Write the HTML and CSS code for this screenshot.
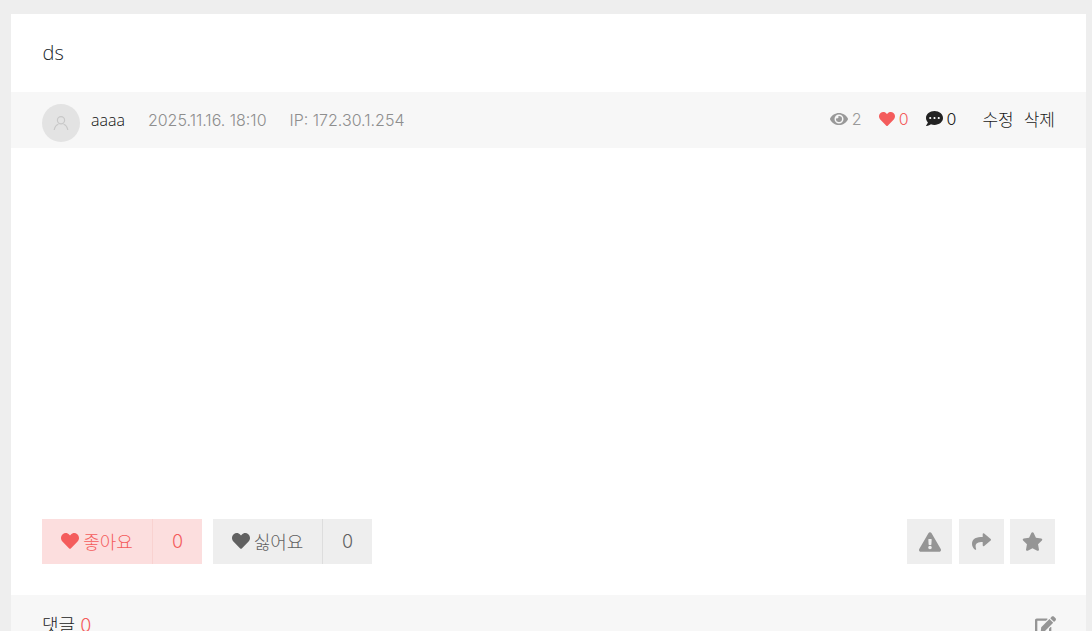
FILE: index.html
```html
<!DOCTYPE html>
<html lang="ko">
<head>
    <meta charset="UTF-8">
    <title>ds</title>
    <link rel="stylesheet" href="styles.css">
</head>
<body>
    <div class="card">
        <h1 class="title">ds</h1>

        <div class="meta">
            <div class="meta-left">
                <div class="avatar">
                    <svg viewBox="0 0 16 16" width="16" height="16" fill="none" stroke="#c8c8c8" stroke-width="1.2"><circle cx="8" cy="5.2" r="3.6"/><path d="M1.2 15c.6-3.6 3-5.4 4.2-5.8M14.8 15c-.6-3.6-3-5.4-4.2-5.8"/></svg>
                </div>
                <span class="author">aaaa</span>
                <span class="date">2025.11.16. 18:10</span>
                <span class="ip">IP: 172.30.1.254</span>
            </div>
            <div class="meta-right">
                <span class="stat stat-view">
                    <svg class="ico" viewBox="0 0 576 512" width="18" height="16"><path d="M572.52 241.4C518.29 135.59 410.93 64 288 64S57.68 135.64 3.48 241.41a32.35 32.35 0 0 0 0 29.19C57.71 376.41 165.07 448 288 448s230.32-71.64 284.52-177.41a32.35 32.35 0 0 0 0-29.19zM288 400a144 144 0 1 1 144-144 143.93 143.93 0 0 1-144 144zm0-240a95.31 95.31 0 0 0-25.31 3.79 47.85 47.85 0 0 1-66.9 66.9A95.78 95.78 0 1 0 288 160z"/></svg>
                    2
                </span>
                <span class="stat stat-like">
                    <svg class="ico" viewBox="0 0 512 512" width="16" height="16"><path d="M462.3 62.6C407.5 15.9 326 24.3 275.7 76.2L256 96.5l-19.7-20.3C186.1 24.3 104.5 15.9 49.7 62.6c-62.8 53.6-66.1 149.8-9.9 207.9l193.5 199.8c12.5 12.9 32.8 12.9 45.3 0l193.5-199.8c56.3-58.1 53-154.3-9.8-207.9z"/></svg>
                    0
                </span>
                <span class="stat stat-comment">
                    <svg class="ico" viewBox="0 0 512 512" width="17" height="17"><path d="M256 32C114.6 32 0 125.1 0 240c0 49.6 21.4 95 57 130.7C44.5 421.1 2.7 466 2.2 466.5c-2.2 2.3-2.8 5.7-1.5 8.7S4.8 480 8 480c66.3 0 116-31.8 140.6-51.4 32.7 12.3 69 19.4 107.4 19.4 141.4 0 256-93.1 256-208S397.4 32 256 32zM128 272c-17.7 0-32-14.3-32-32s14.3-32 32-32 32 14.3 32 32-14.3 32-32 32zm128 0c-17.7 0-32-14.3-32-32s14.3-32 32-32 32 14.3 32 32-14.3 32-32 32zm128 0c-17.7 0-32-14.3-32-32s14.3-32 32-32 32 14.3 32 32-14.3 32-32 32z"/></svg>
                    0
                </span>
                <a class="meta-link meta-link-first">수정</a>
                <a class="meta-link">삭제</a>
            </div>
        </div>

        <div class="content"></div>

        <div class="actions">
            <div class="vote">
                <div class="vote-btn vote-like">
                    <span class="vote-label">
                        <svg class="ico" viewBox="0 0 512 512" width="18" height="18"><path d="M462.3 62.6C407.5 15.9 326 24.3 275.7 76.2L256 96.5l-19.7-20.3C186.1 24.3 104.5 15.9 49.7 62.6c-62.8 53.6-66.1 149.8-9.9 207.9l193.5 199.8c12.5 12.9 32.8 12.9 45.3 0l193.5-199.8c56.3-58.1 53-154.3-9.8-207.9z"/></svg>
                        좋아요
                    </span>
                    <span class="vote-count">0</span>
                </div>
                <div class="vote-btn vote-hate">
                    <span class="vote-label">
                        <svg class="ico" viewBox="0 0 512 512" width="18" height="18"><path d="M462.3 62.6C407.5 15.9 326 24.3 275.7 76.2L256 96.5l-19.7-20.3C186.1 24.3 104.5 15.9 49.7 62.6c-62.8 53.6-66.1 149.8-9.9 207.9l193.5 199.8c12.5 12.9 32.8 12.9 45.3 0l193.5-199.8c56.3-58.1 53-154.3-9.8-207.9z"/></svg>
                        싫어요
                    </span>
                    <span class="vote-count">0</span>
                </div>
            </div>
            <div class="tools">
                <div class="tool-btn tool-report">
                    <svg class="ico" viewBox="0 0 576 512" width="22" height="20"><path d="M569.517 440.013C587.975 472.007 564.806 512 527.94 512H48.054c-36.937 0-59.999-40.055-41.577-71.987L246.423 23.985c18.467-32.009 64.72-31.951 83.154 0l239.94 416.028zM288 354c-25.405 0-46 20.595-46 46s20.595 46 46 46 46-20.595 46-46-20.595-46-46-46zm-43.673-165.346l7.418 136c.347 6.364 5.609 11.346 11.982 11.346h48.546c6.373 0 11.635-4.982 11.982-11.346l7.418-136c.375-6.874-5.098-12.654-11.982-12.654h-63.383c-6.884 0-12.356 5.78-11.981 12.654z"/></svg>
                </div>
                <div class="tool-btn">
                    <svg class="ico" viewBox="0 0 512 512" width="19" height="19"><path d="M503.691 189.836L327.687 37.851C312.281 24.546 288 35.347 288 56.015v80.053C127.371 137.907 0 170.1 0 322.326c0 61.441 39.581 122.309 83.333 154.132 13.653 9.931 33.111-2.533 28.077-18.631C66.066 312.814 132.917 274.316 288 272.085V360c0 20.7 24.3 31.453 39.687 18.164l176.004-152c11.071-9.562 11.086-26.753 0-36.328z"/></svg>
                </div>
                <div class="tool-btn">
                    <svg class="ico" viewBox="0 0 576 512" width="21" height="19"><path d="M259.3 17.8L194 150.2 47.9 171.5c-26.2 3.8-36.7 36.1-17.7 54.6l105.7 103-25 145.5c-4.5 26.3 23.2 46 46.4 33.7L288 439.6l130.7 68.7c23.2 12.2 50.9-7.4 46.4-33.7l-25-145.5 105.7-103c19-18.5 8.5-50.8-17.7-54.6L382 150.2 316.7 17.8c-11.7-23.6-45.6-23.9-57.4 0z"/></svg>
                </div>
            </div>
        </div>

        <div class="comments">
            <span class="comments-title">댓글 <em>0</em></span>
            <svg class="ico comments-write" viewBox="0 0 576 512" width="21" height="19"><path d="M402.6 83.2l90.2 90.2c3.8 3.8 3.8 10 0 13.8L274.4 405.6l-92.8 10.3c-12.4 1.4-22.9-9.1-21.5-21.5l10.3-92.8L388.8 83.2c3.8-3.8 10-3.8 13.8 0zm162-22.9l-48.8-48.8c-15.2-15.2-39.9-15.2-55.2 0l-35.4 35.4c-3.8 3.8-3.8 10 0 13.8l90.2 90.2c3.8 3.8 10 3.8 13.8 0l35.4-35.4c15.2-15.3 15.2-40 0-55.2zM384 346.2V448H64V128h229.8c3.2 0 6.2-1.3 8.5-3.5l40-40c7.6-7.6 2.2-20.5-8.5-20.5H48C21.5 64 0 85.5 0 112v352c0 26.5 21.5 48 48 48h352c26.5 0 48-21.5 48-48V306.2c0-10.7-12.9-16-20.5-8.5l-40 40c-2.2 2.3-3.5 5.3-3.5 8.5z"/></svg>
        </div>
    </div>
</body>
</html>
```

FILE: styles.css
```css
html, body {
    height: 631px;
    overflow: hidden;
}
body {
    margin: 0;
    padding: 14px 6px 0 11px;
    background-color: #eeeeee;
    color: #222;
    font-family: 'Open Sans', 'Noto Sans CJK KR', sans-serif;
    font-size: 16px;
    font-weight: 300;
}
.ico {
    fill: currentColor;
    flex: none;
}
.card {
    background-color: #fff;
}
.title {
    margin: 0;
    padding: 0 31.5px;
    height: 78px;
    line-height: 78px;
    font-size: 20px;
    font-weight: 300;
    color: #1a1f2c;
}
.meta {
    display: flex;
    justify-content: space-between;
    align-items: center;
    height: 56px;
    padding: 0 31px;
    background-color: #f7f7f7;
}
.meta-left, .meta-right, .stat {
    display: flex;
    align-items: center;
}
.avatar {
    display: flex;
    align-items: center;
    justify-content: center;
    width: 38px;
    height: 38px;
    margin: 5px 11px 0 0;
    border-radius: 50%;
    background-color: #e3e3e3;
}
.author {
    font-size: 16px;
    color: #111;
    margin-right: 23px;
}
.date, .ip {
    font-family: Inter, sans-serif;
    font-size: 16px;
    font-weight: 300;
    color: #8e8e8e;
}
.date {
    margin-right: 23px;
}
.meta-right {
    margin-top: -3px;
}
.stat {
    gap: 4px;
    font-family: Inter, sans-serif;
    font-size: 16px;
    font-weight: 300;
}
.stat-view {
    margin-right: 17px;
    color: #999;
}
.stat-like {
    margin-right: 17px;
    color: #f45c5c;
}
.stat-comment {
    color: #222;
}
.meta-link {
    margin-left: 10px;
    font-family: 'Noto Sans CJK KR', sans-serif;
    font-size: 17px;
    color: #1a1a1a;
}
.meta-link-first {
    margin-left: 26px;
}
.content {
    height: 371px;
}
.actions {
    display: flex;
    justify-content: space-between;
    padding: 0 31px;
    height: 45px;
}
.vote, .tools {
    display: flex;
}
.vote {
    gap: 11px;
}
.tools {
    gap: 6px;
}
.vote-btn {
    display: flex;
    height: 45px;
    font-family: 'Noto Sans CJK KR', sans-serif;
    font-size: 18px;
}
.vote-label {
    display: flex;
    align-items: center;
    justify-content: center;
    gap: 4px;
    width: 110px;
    padding-bottom: 2px;
    box-sizing: border-box;
}
.vote-count {
    display: flex;
    align-items: center;
    justify-content: center;
    width: 49px;
    font-family: Inter, sans-serif;
    border-left: 1px solid;
}
.vote-like {
    background-color: #fcdede;
    color: #f45c5c;
}
.vote-like .vote-count {
    border-left-color: #f9d2d0;
}
.vote-hate {
    background-color: #eeeeee;
    color: #616161;
}
.vote-hate .vote-label {
    width: 109px;
}
.vote-hate .vote-count {
    border-left-color: #dddddd;
}
.tool-btn {
    display: flex;
    align-items: center;
    justify-content: center;
    width: 45px;
    height: 45px;
    background-color: #eeeeee;
    color: #959595;
}
.tool-report {
    margin-right: 1px;
}
.comments {
    display: flex;
    justify-content: space-between;
    margin-top: 31px;
    padding: 18px 31px 0;
    height: 60px;
    background-color: #f7f7f7;
}
.comments-title {
    font-family: 'Noto Sans CJK KR', sans-serif;
    font-size: 18px;
    line-height: 22px;
    color: #222;
}
.comments-title em {
    font-family: Inter, sans-serif;
    font-style: normal;
    font-weight: 300;
    color: #f45c5c;
}
.comments-write {
    color: #959595;
    margin-top: 3px;
    margin-right: -1px;
}
```
